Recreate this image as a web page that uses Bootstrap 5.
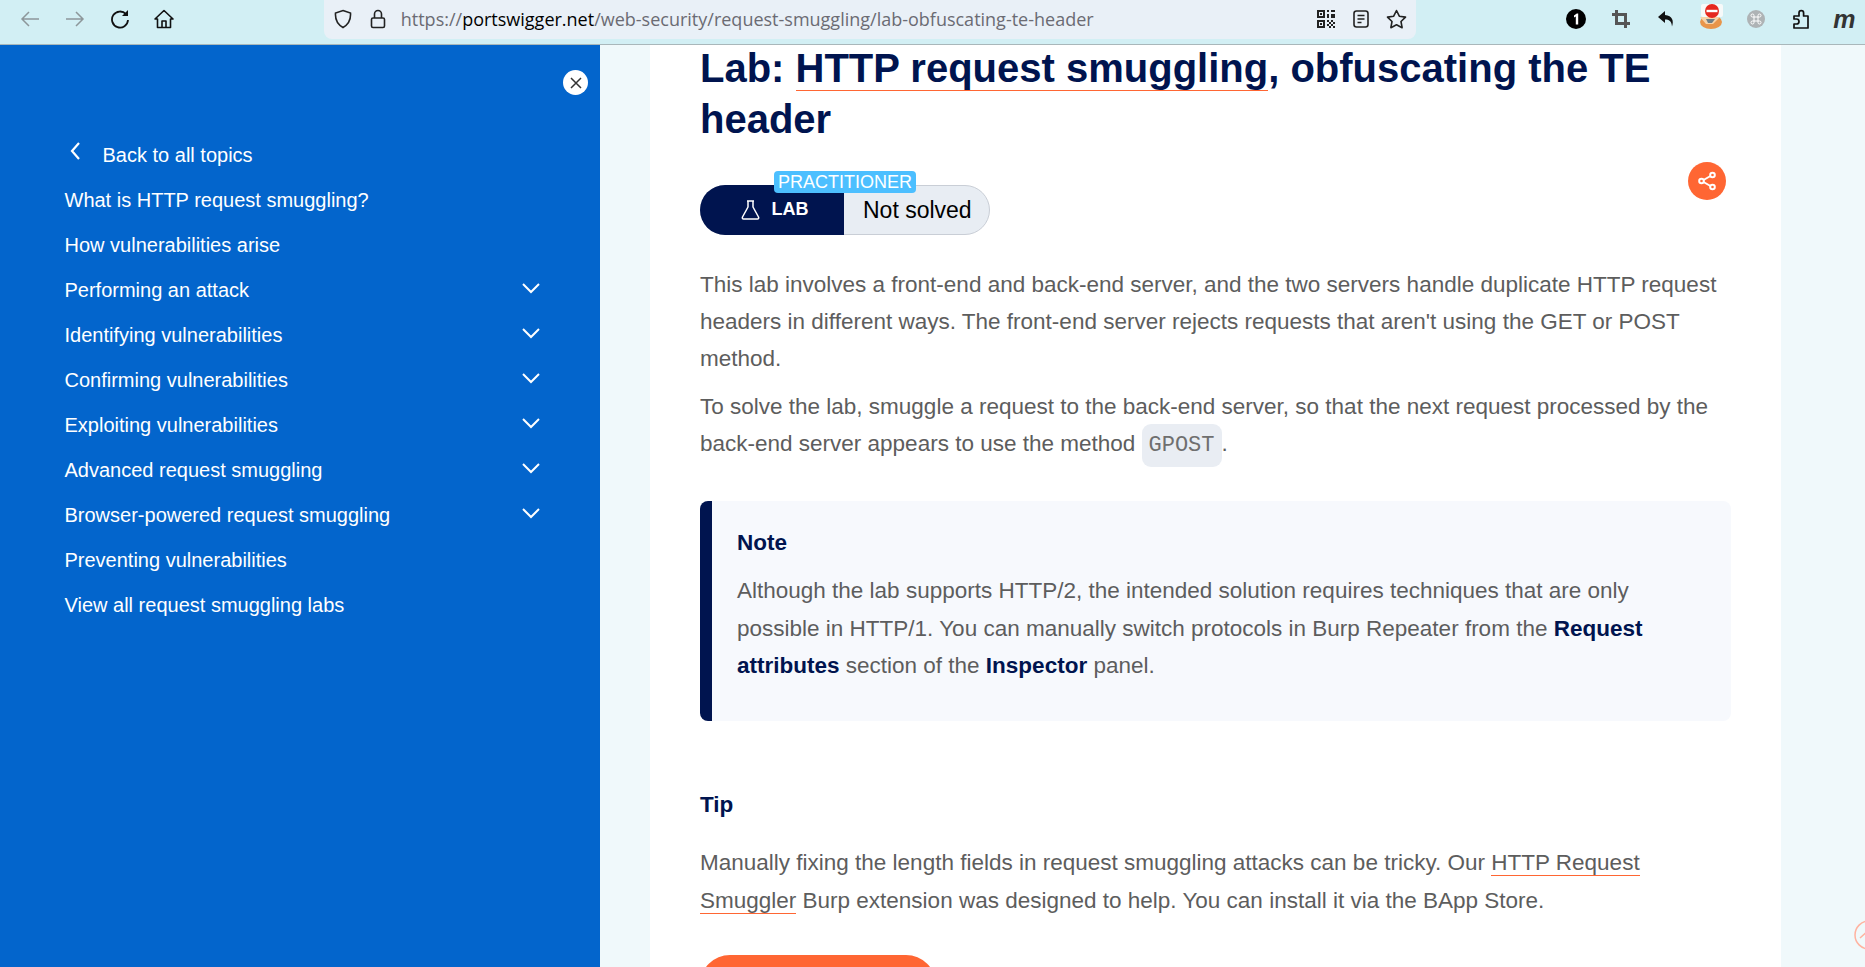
<!DOCTYPE html>
<html lang="en">
<head>
  <meta charset="UTF-8" />
  <meta name="viewport" content="width=device-width, initial-scale=1.0" />
  <title>Lab: HTTP request smuggling, obfuscating the TE header</title>
  <link rel="stylesheet" href="https://cdn.jsdelivr.net/npm/bootstrap@5.3.0/dist/css/bootstrap.min.css">
  <style>
    html, body { height: 100%; overflow: hidden; }
    body { font-family: "Liberation Sans", Arial, sans-serif; font-size: 22.5px; line-height: 37.5px; color: #5d5d5d; background: #f0f9fb; }

    /* browser toolbar */
    .tool-bar { height: 45px; background: #d2eff4; border-bottom: 1px solid #a9b7ba; padding-left: 8px; overflow: hidden; }
    .tool-btn { width: 44.7px; height: 38px; flex: none; }
    .ext-btn { width: 45px; }
    .url-box { width: 1092px; flex: none; height: 39px; margin-left: 137px; margin-right: 138px; background: #e9f0f7; border-radius: 0 0 8px 8px; padding: 0 2px 0 2px; }
    .url-box .tool-btn { width: 35px; }
    .url-text { font-family: "Open Sans", sans-serif; font-size: 18px; line-height: 38px; color: #6b6b73; margin-left: 5px; white-space: nowrap; }
    .url-text b { font-weight: 400; color: #000; }
    .fox-icon { margin-top: -7px; }
    .ext-m { font-size: 25px; color: #333; margin-left: -4px; }

    /* side menu */
    .side-menu { width: 600px; flex: none; background: #0365cc; color: #fff; font-size: 20px; padding: 0 0 0 64.5px; position: relative; }
    .side-close { position: absolute; left: 563px; top: 25px; width: 25px; height: 25px; background: #fff; border-radius: 50%; }
    .side-list { padding-top: 88px; width: 475px; }
    .side-row { height: 45px; line-height: 45px; color: #fff; text-decoration: none; }
    .side-row svg { margin-top: -5px; }
    .side-back { padding-left: 38px; position: relative; }
    .side-back svg { position: absolute; left: 4px; top: 9px; margin: 0; }

    /* article */
    .page-col { width: 1131px; margin-left: 50px; background: #fff; padding: 0 50px; flex: none; height: 922px; overflow: hidden; }
    h1.lab-title { font-family: inherit; font-size: 40px; font-weight: 700; line-height: 51px; color: #00144f; margin: -2px 0 0; }
    .orange-link { color: inherit; text-decoration: none; border-bottom: 1px solid #ff6633; }
    .lab-status { height: 50px; width: 290px; margin-top: 40px; position: relative; border: 1px solid #c9ced6; background: #e8edf3; overflow: visible; }
    .lab-kind { width: 144px; margin: -1px 0 -1px -1px; background: #00144f; color: #fff; font-size: 18px; font-weight: 700; border-radius: 25px 0 0 25px; gap: 12px; padding-left: 5px; }
    .lab-state { color: #000; font-size: 23px; padding-left: 19px; line-height: 48px; }
    .lab-level { position: absolute; left: 73px; top: -15px; height: 22px; width: 142px; background: #4cbfff; color: #fff; font-size: 18px; line-height: 22px; text-align: center; border-radius: 4px; }
    .share-btn { position: absolute; left: 1038px; top: 117px; width: 38px; height: 38px; background: #ff6633; border-radius: 50%; }
    .lab-copy { margin-top: 31px; }
    .lab-copy p { margin-bottom: 0; line-height: 37.2px; }
    .lab-copy p + p { margin-top: 10px; }
    .lab-copy code { font-family: "Liberation Mono", monospace; font-size: 22px; color: #6f6f6f; background: #e9edf3; border-radius: 9px; padding: 9px 7px; }
    .note-box { height: 220px; margin-top: 37px; background: #f7f9fd; border-left: 12px solid #00144f; border-radius: 8px; padding: 23px 25px 0 25px; }
    .note-box h4, .tip-head { font-family: inherit; font-size: 22.5px; font-weight: 700; color: #00144f; line-height: 38px; margin: 0; }
    .note-box h4 { margin-bottom: 10px; }
    .note-box p { margin: 0; }
    .note-box strong { color: #00144f; }
    .tip-head { margin-top: 65px; margin-bottom: 20px; }
    .tip-copy { margin: 0; }
    .orange-btn { width: 236px; height: 60px; margin-top: 36px; background: #ff6633; border: 0; border-radius: 30px; }
    .top-ring { position: absolute; left: 1854px; top: 875px; width: 30px; height: 30px; }
    .shell { position: relative; }
  </style>
</head>
<body>
  <!-- browser bar -->
  <div class="tool-bar d-flex align-items-start">
    <div class="tool-btn d-flex align-items-center justify-content-center">
      <svg width="20" height="18" viewBox="0 0 20 18" fill="none" stroke="#8d979a" stroke-width="1.5"><path d="M19 9H2M9 2 2 9l7 7"/></svg>
    </div>
    <div class="tool-btn d-flex align-items-center justify-content-center">
      <svg width="20" height="18" viewBox="0 0 20 18" fill="none" stroke="#8d979a" stroke-width="1.5"><path d="M1 9h17M11 2l7 7-7 7"/></svg>
    </div>
    <div class="tool-btn d-flex align-items-center justify-content-center">
      <svg width="20" height="20" viewBox="0 0 20 20" fill="none" stroke="#111" stroke-width="1.8"><path d="M16 5.2A8 8 0 1 0 18 11"/><path d="M18 1v6h-6z" fill="#111" stroke="none"/></svg>
    </div>
    <div class="tool-btn d-flex align-items-center justify-content-center">
      <svg width="20" height="20" viewBox="0 0 20 20" fill="none" stroke="#111" stroke-width="1.6" stroke-linejoin="round"><path d="M1 10 10 1.500 19 10h-2.500v8.500h-13V10z"/><path d="M8 18.500V12h4v6.500"/></svg>
    </div>
    <div class="url-box d-flex align-items-start">
      <div class="tool-btn d-flex align-items-center justify-content-center">
        <svg width="18" height="20" viewBox="0 0 18 20" fill="none" stroke="#222" stroke-width="1.6"><path d="M9 1.500 16.500 4c.5 7-2 11.500-7.500 14.500C3.500 15.500 1 11 1.500 4z"/></svg>
      </div>
      <div class="tool-btn d-flex align-items-center justify-content-center">
        <svg width="16" height="20" viewBox="0 0 16 20" fill="none" stroke="#222" stroke-width="1.6"><rect x="1.500" y="9" width="13" height="9.500" rx="1.500"/><path d="M4.500 9V5a3.500 3.500 0 0 1 7 0v4"/></svg>
      </div>
      <span class="url-text flex-grow-1">https://<b>portswigger.net</b>/web-security/request-smuggling/lab-obfuscating-te-header</span>
      <div class="tool-btn d-flex align-items-center justify-content-center">
        <svg width="18" height="18" viewBox="0 0 18 18" fill="#222"><path d="M0 0h8v8H0zM2 2v4h4V2zM3 3h2v2H3zM10 0h2v2h-2zM14 0h4v2h-4zM10 4h2v4h-2zM14 4h4v4h-4zM0 10h8v8H0zM2 12v4h4v-4zM3 13h2v2H3zM10 10h2v2h-2zM14 10h2v2h-2zM12 12h2v2h-2zM16 12h2v2h-2zM10 14h2v2h-2zM14 14h2v2h-2zM12 16h2v2h-2zM16 16h2v2h-2z"/></svg>
      </div>
      <div class="tool-btn d-flex align-items-center justify-content-center">
        <svg width="16" height="18" viewBox="0 0 16 18" fill="none" stroke="#222" stroke-width="1.6"><rect x="1" y="1" width="14" height="16" rx="2.500"/><path d="M4.500 5.500h7M4.500 9h7M4.500 12.500h4"/></svg>
      </div>
      <div class="tool-btn d-flex align-items-center justify-content-center">
        <svg width="21" height="20" viewBox="0 0 21 20" fill="none" stroke="#222" stroke-width="1.6" stroke-linejoin="round"><path d="m10.500 1.500 2.800 5.700 6.200.9-4.500 4.400 1.100 6.200-5.600-2.900-5.600 2.900 1.100-6.200L1.500 8.100l6.200-.9z"/></svg>
      </div>
    </div>
    <div class="tool-btn ext-btn d-flex align-items-center justify-content-center">
      <svg width="20" height="20" viewBox="0 0 20 20"><circle cx="10" cy="10" r="10" fill="#000"/><path d="M8 6.500 10.800 4.500h1.400v11h-2.400V7.500L8 8.500z" fill="#fff"/></svg>
    </div>
    <div class="tool-btn ext-btn d-flex align-items-center justify-content-center">
      <svg width="18" height="18" viewBox="0 0 18 18" fill="none" stroke="#555" stroke-width="3"><path d="M4.500 0v13.500H18M0 4.500h13.500V18"/></svg>
    </div>
    <div class="tool-btn ext-btn d-flex align-items-center justify-content-center">
      <svg width="18" height="18" viewBox="0 0 18 18" fill="#111"><path d="M8 1 1 7l7 6V9.500c4 0 6.500 1.500 7 7 2-5.500.5-11-7-11.500z"/></svg>
    </div>
    <div class="tool-btn ext-btn d-flex align-items-center justify-content-center">
      <svg class="fox-icon" width="24" height="26" viewBox="0 0 24 26"><ellipse cx="12" cy="19" rx="11" ry="7" fill="#e8954a"/><path d="M1 14h20l-7 7H7z" fill="#f6d3a8"/><path d="M7 16h9l-3 4H9z" fill="#6f7f86"/><rect x="2" y="1" width="22" height="13" rx="2" fill="#f7f9f9"/><circle cx="13" cy="8" r="7" fill="#e5281f"/><rect x="7.500" y="6.800" width="11" height="2.400" fill="#fff"/></svg>
    </div>
    <div class="tool-btn ext-btn d-flex align-items-center justify-content-center">
      <svg width="18" height="18" viewBox="0 0 18 18"><circle cx="9" cy="9" r="9" fill="#aeb3b5"/><path d="M7 7h4v4H7zM7 7H5.500a1.500 1.500 0 1 1 1.500-1.500zM11 7V5.500A1.500 1.500 0 1 1 12.500 7zM7 11v1.500A1.500 1.500 0 1 1 5.500 11zM11 11h1.500a1.500 1.500 0 1 1-1.500 1.500z" fill="none" stroke="#fff" stroke-width="1"/></svg>
    </div>
    <div class="tool-btn ext-btn d-flex align-items-center justify-content-center">
      <svg width="20" height="20" viewBox="0 0 20 20" fill="none" stroke="#111" stroke-width="1.700" stroke-linejoin="round"><path d="M3 7h5V4a2.300 2.300 0 0 1 4.600 0v3H17v12H3v-4h2.500a2 2 0 0 0 0-5H3z"/></svg>
    </div>
    <div class="tool-btn ext-btn d-flex align-items-center justify-content-center">
      <span class="ext-m fw-bold fst-italic lh-1">m</span>
    </div>
  </div>

  <div class="shell d-flex">
    <!-- topics -->
    <aside class="side-menu">
      <span class="side-close d-flex align-items-center justify-content-center">
        <svg width="12" height="12" viewBox="0 0 12 12" stroke="#333" stroke-width="1.500"><path d="M1 1l10 10M11 1 1 11"/></svg>
      </span>
      <nav class="side-list d-flex flex-column">
        <a class="side-row side-back" href="#"><svg width="12" height="18" viewBox="0 0 12 18" fill="none" stroke="#fff" stroke-width="2.200"><path d="M10 1 3 9l7 8"/></svg>Back to all topics</a>
        <a class="side-row" href="#">What is HTTP request smuggling?</a>
        <a class="side-row" href="#">How vulnerabilities arise</a>
        <a class="side-row d-flex justify-content-between align-items-center" href="#">Performing an attack<svg width="18" height="11" viewBox="0 0 18 11" fill="none" stroke="#fff" stroke-width="2"><path d="m1 1 8 8 8-8"/></svg></a>
        <a class="side-row d-flex justify-content-between align-items-center" href="#">Identifying vulnerabilities<svg width="18" height="11" viewBox="0 0 18 11" fill="none" stroke="#fff" stroke-width="2"><path d="m1 1 8 8 8-8"/></svg></a>
        <a class="side-row d-flex justify-content-between align-items-center" href="#">Confirming vulnerabilities<svg width="18" height="11" viewBox="0 0 18 11" fill="none" stroke="#fff" stroke-width="2"><path d="m1 1 8 8 8-8"/></svg></a>
        <a class="side-row d-flex justify-content-between align-items-center" href="#">Exploiting vulnerabilities<svg width="18" height="11" viewBox="0 0 18 11" fill="none" stroke="#fff" stroke-width="2"><path d="m1 1 8 8 8-8"/></svg></a>
        <a class="side-row d-flex justify-content-between align-items-center" href="#">Advanced request smuggling<svg width="18" height="11" viewBox="0 0 18 11" fill="none" stroke="#fff" stroke-width="2"><path d="m1 1 8 8 8-8"/></svg></a>
        <a class="side-row d-flex justify-content-between align-items-center" href="#">Browser-powered request smuggling<svg width="18" height="11" viewBox="0 0 18 11" fill="none" stroke="#fff" stroke-width="2"><path d="m1 1 8 8 8-8"/></svg></a>
        <a class="side-row" href="#">Preventing vulnerabilities</a>
        <a class="side-row" href="#">View all request smuggling labs</a>
      </nav>
    </aside>

    <!-- article -->
    <main class="page-col position-relative">
      <h1 class="lab-title">Lab: <a class="orange-link" href="#">HTTP request smuggling</a>, obfuscating the TE header</h1>
      <div class="lab-status d-flex rounded-pill">
        <span class="lab-kind d-flex align-items-center justify-content-center">
          <svg width="19" height="20" viewBox="0 0 19 20" fill="none" stroke="#fff" stroke-width="1.500" stroke-linejoin="round"><path d="M6 1h7M7 1v6L1.500 17c-.5 1 0 2 1 2h14c1 0 1.500-1 1-2L12 7V1"/></svg>
          LAB
        </span>
        <span class="lab-state">Not solved</span>
        <span class="lab-level">PRACTITIONER</span>
      </div>
      <span class="share-btn d-flex align-items-center justify-content-center">
        <svg width="20" height="20" viewBox="0 0 20 20" fill="none" stroke="#fff" stroke-width="2"><circle cx="15.500" cy="4" r="2.300"/><circle cx="4.500" cy="10" r="2.300"/><circle cx="15.500" cy="16" r="2.300"/><path d="m6.500 9 7-4M6.500 11l7 4"/></svg>
      </span>
      <div class="lab-copy">
        <p>This lab involves a front-end and back-end server, and the two servers handle duplicate HTTP request headers in different ways. The front-end server rejects requests that aren't using the GET or POST method.</p>
        <p>To solve the lab, smuggle a request to the back-end server, so that the next request processed by the back-end server appears to use the method <code>GPOST</code>.</p>
      </div>
      <div class="note-box">
        <h4>Note</h4>
        <p>Although the lab supports HTTP/2, the intended solution requires techniques that are only possible in HTTP/1. You can manually switch protocols in Burp Repeater from the <strong>Request attributes</strong> section of the <strong>Inspector</strong> panel.</p>
      </div>
      <h4 class="tip-head">Tip</h4>
      <p class="tip-copy">Manually fixing the length fields in request smuggling attacks can be tricky. Our <a class="orange-link" href="#">HTTP Request Smuggler</a> Burp extension was designed to help. You can install it via the BApp Store.</p>
      <button class="orange-btn d-block" type="button"></button>
    </main>

    <svg class="top-ring" viewBox="0 0 30 30" fill="none" stroke="#ffb3a0" stroke-width="1.500"><circle cx="15" cy="15" r="14"/><path d="m6 18 9-8 9 8"/></svg>
  </div>

  <script src="https://cdn.jsdelivr.net/npm/bootstrap@5.3.0/dist/js/bootstrap.bundle.min.js"></script>
</body>
</html>
